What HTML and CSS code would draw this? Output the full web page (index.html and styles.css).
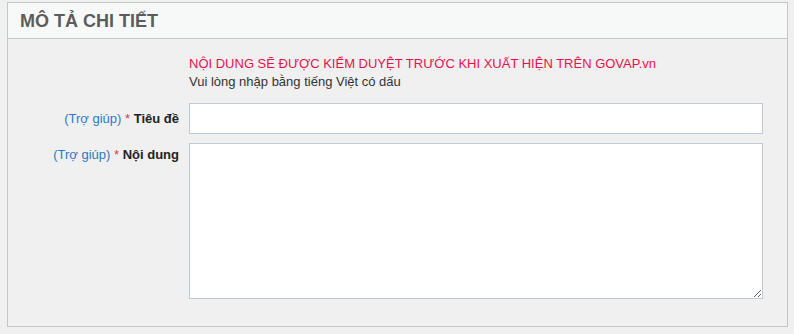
FILE: index.html
```html
<!DOCTYPE html>
<html>

<head>
    <meta charset="utf-8">
    <meta name="viewport" content="width=device-width, initial-scale=1.0">
    <title>Mô tả chi tiết</title>
    <link rel="stylesheet" href="styles.css">
</head>

<body>
    <div class="panel">
        <div class="panel-title">MÔ TẢ CHI TIẾT</div>
        <div class="panel-body">
            <div class="form-row">
                <div class="form-label"></div>
                <div class="form-field notice">
                    <div class="notice-warn">NỘI DUNG SẼ ĐƯỢC KIỂM DUYỆT TRƯỚC KHI XUẤT HIỆN TRÊN GOVAP.vn</div>
                    <div class="notice-hint">Vui lòng nhập bằng tiếng Việt có dấu</div>
                </div>
            </div>

            <div class="form-row">
                <label class="form-label label-input" for="title">
                    <a href="#" class="help">(Trợ giúp)</a> <span class="req">*</span> <b>Tiêu đề</b>
                </label>
                <div class="form-field">
                    <input type="text" id="title" class="text-input">
                </div>
            </div>

            <div class="form-row">
                <label class="form-label label-area" for="content">
                    <a href="#" class="help">(Trợ giúp)</a> <span class="req">*</span> <b>Nội dung</b>
                </label>
                <div class="form-field">
                    <textarea id="content" class="text-area"></textarea>
                </div>
            </div>
        </div>
    </div>
</body>

</html>
```

FILE: styles.css
```css
body {
    margin: 0;
    padding: 2px 0 0 7px;
    background-color: #f0f0f0;
    font-family: Arial, "Liberation Sans", sans-serif;
    font-size: 13px;
    color: #333;
}

.panel {
    width: 779px;
    border: 1px solid #c6c6c6;
    background-color: #f0f0f0;
}

.panel-title {
    height: 35px;
    line-height: 36px;
    padding-left: 12px;
    background-color: #f7f9f9;
    border-bottom: 1px solid #c6c6c6;
    font-size: 18px;
    font-weight: bold;
    color: #5c5c5c;
}

.panel-body {
    display: flex;
    flex-direction: column;
    gap: 9px;
    padding: 16px 0 27px;
}

.form-row {
    display: flex;
}

.form-label {
    width: 181px;
    padding-right: 10px;
    box-sizing: border-box;
    text-align: right;
    font-size: 13px;
}

.label-input {
    padding-top: 8px;
}

.label-area {
    padding-top: 4px;
}

.form-label b {
    color: #222;
}

.help {
    color: #2b7bc4;
    text-decoration: none;
}

.req {
    color: #d9364d;
}

.form-field {
    width: 574px;
}

.notice {
    line-height: 18px;
    margin-bottom: 3px;
}

.notice-warn {
    color: #e8114b;
}

.notice-hint {
    color: #333;
}

.text-input,
.text-area {
    display: block;
    width: 100%;
    box-sizing: border-box;
    border: 1px solid #bccbd8;
    background-color: #fff;
    font-family: inherit;
    font-size: 13px;
    padding: 4px 6px;
    margin: 0;
}

.text-input {
    height: 31px;
}

.text-area {
    height: 156px;
    resize: vertical;
}
```
